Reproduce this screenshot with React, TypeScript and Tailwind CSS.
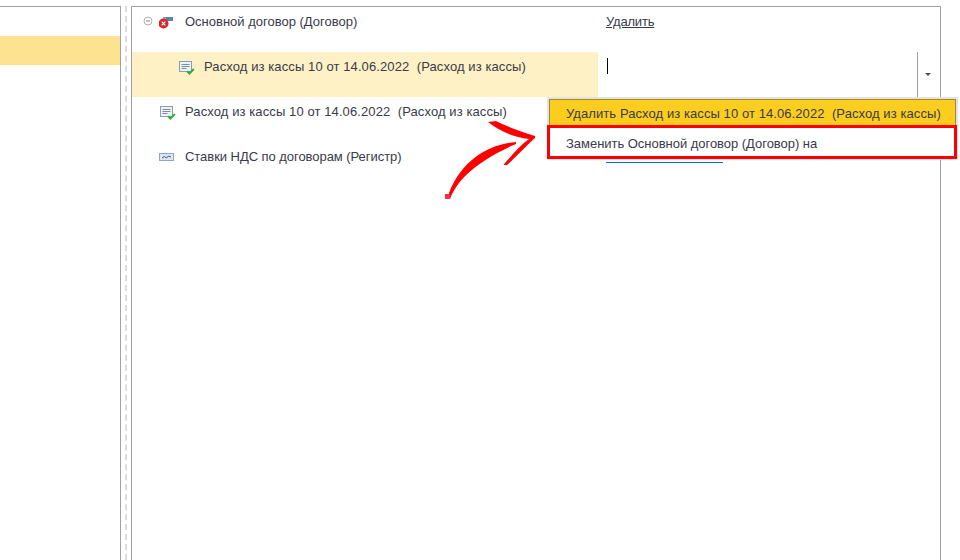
const textStyle = "text-[13px] leading-[14px] text-[#3a3a4a] whitespace-pre";

function CloseDocIcon() {
  return (
    <svg width="16" height="18" viewBox="0 0 16 18" className="shrink-0 translate-y-[1px]">
      <rect x="4" y="4" width="10" height="4" fill="#5f84a8" />
      <rect x="4" y="4.5" width="3" height="3" fill="#9fb6cf" />
      <circle cx="4.5" cy="10.5" r="5" fill="#d7262c" />
      <path d="M2.7 8.7l3.6 3.6M6.3 8.7l-3.6 3.6" stroke="#fff" strokeWidth="1.2" />
    </svg>
  );
}

function DocIcon() {
  return (
    <svg width="16" height="16" viewBox="0 0 16 16" className="shrink-0 translate-y-[2px]">
      <rect x="0.5" y="1.5" width="12" height="10" fill="#eef2f6" stroke="#8a9fb5" />
      <path d="M2.5 4.5h8M2.5 6.5h8M2.5 8.5h5" stroke="#7f8c99" strokeWidth="1" />
      <path d="M8.2 11.2l2.2 2.3 4.4-4.5" fill="none" stroke="#2fae3a" strokeWidth="2" />
    </svg>
  );
}

function RegisterIcon() {
  return (
    <svg width="16" height="10" viewBox="0 0 16 10" className="shrink-0 translate-y-[2px]">
      <rect x="0.5" y="0.5" width="14" height="7" fill="#dbe6f1" stroke="#8ea7c2" />
      <path d="M3 5l2.5-1.5 2 1.5 2-2 2.5 1" fill="none" stroke="#43586e" strokeWidth="1" />
    </svg>
  );
}

function RedArrow() {
  return (
    <svg width="100" height="90" viewBox="0 0 100 90" className="absolute left-[440px] top-[115px]">
      <path
        d="M48 7L56 6C64 10 76 15 95 21L95 23C84 33 76 42 67 50L63.5 50C72 40 80 30 89 24C72 22 58 15 48 7Z"
        fill="#ff0000"
      />
      <path d="M76 27C50 29 22 44 9 78L10 84C16 68 32 48 76 29Z" fill="#ff0000" />
      <rect x="5" y="79" width="5" height="5" fill="#f03040" />
    </svg>
  );
}

export default function App() {
  return (
    <div className="relative h-[560px] w-[960px] overflow-hidden bg-white font-['Liberation_Sans',sans-serif]">
      <div className="flex h-full pt-[6px]">
        {/* Left list */}
        <div className="w-[121px] shrink-0 border-t border-r border-[#a0a0a0] pt-[29px]">
          <div className="h-[29px] bg-[#fde391]" />
        </div>

        {/* Splitter */}
        <div className="flex w-[10px] shrink-0 justify-center">
          <div className="h-full border-l-2 border-dashed border-[#dcdcdc]" />
        </div>

        {/* Right tree */}
        <div className="w-[810px] shrink-0 border-t border-x border-[#a0a0a0]">
          <div className="flex h-[45px]">
            <div className="flex h-[28px] w-[466px] items-center pl-[11px]">
              <svg width="10" height="10" viewBox="0 0 10 10" className="shrink-0">
                <circle cx="5" cy="5" r="4" fill="#fff" stroke="#b0b0b0" />
                <path d="M3 5h4" stroke="#808080" />
              </svg>
              <span className="ml-[6px]"><CloseDocIcon /></span>
              <span className={`ml-[10px] pt-[2px] ${textStyle}`}>Основной договор (Договор)</span>
            </div>
            <div className="flex h-[28px] items-center pl-[8px]">
              <span className={`mt-[2px] tracking-[-0.2px] underline ${textStyle}`}>Удалить</span>
            </div>
          </div>

          <div className="flex h-[45px]">
            <div className="w-[466px] bg-[#fef1c5] pl-[47px]">
              <div className="flex h-[28px] items-center">
                <DocIcon />
                <span className={`ml-[9px] pt-[2px] tracking-[0.1px] ${textStyle}`}>Расход из кассы 10 от 14.06.2022  (Расход из кассы)</span>
              </div>
            </div>
            <div className="flex w-[342px] items-stretch">
              <div className="flex-1 pl-[9px] pt-[6px]">
                <div className="h-[16px] w-px bg-black" />
              </div>
              <div className="flex w-[23px] items-center justify-center border-l border-[#a0a0a0] pr-[3px]">
                <div className="h-0 w-0 border-x-[3px] border-t-[3px] border-x-transparent border-t-[#505050]" />
              </div>
            </div>
          </div>

          <div className="h-[45px] pl-[28px]">
            <div className="flex h-[28px] items-center">
              <DocIcon />
              <span className={`ml-[9px] pt-[2px] tracking-[0.1px] ${textStyle}`}>Расход из кассы 10 от 14.06.2022  (Расход из кассы)</span>
            </div>
          </div>

          <div className="flex h-[45px]">
            <div className="flex h-[28px] w-[466px] items-center pl-[27px]">
              <RegisterIcon />
              <span className={`ml-[10px] pt-[2px] tracking-[-0.05px] ${textStyle}`}>Ставки НДС по договорам (Регистр)</span>
            </div>
            <div className="ml-[8px] h-[21px] w-[117px] border-b border-[#0a66e0]" />
          </div>
        </div>
      </div>

      {/* Context menu */}
      <div className="absolute left-[547px] top-[97px] w-[411px] border-2 border-[#e2e2e2] bg-white">
        <div className={`flex h-[26px] items-center border border-b-0 border-[#a08a30] bg-[#fbcd1f] pl-[16px] pt-[3px] tracking-[0.08px] ${textStyle}`}>
          Удалить Расход из кассы 10 от 14.06.2022  (Расход из кассы)
        </div>
        <div className={`-mb-[1px] -ml-[2px] -mr-[1px] flex h-[34px] items-center border-[3px] border-[#ff0000] pl-[16px] pt-[3px] tracking-[-0.03px] ${textStyle}`}>
          Заменить Основной договор (Договор) на
        </div>
      </div>

      <RedArrow />
    </div>
  );
}
